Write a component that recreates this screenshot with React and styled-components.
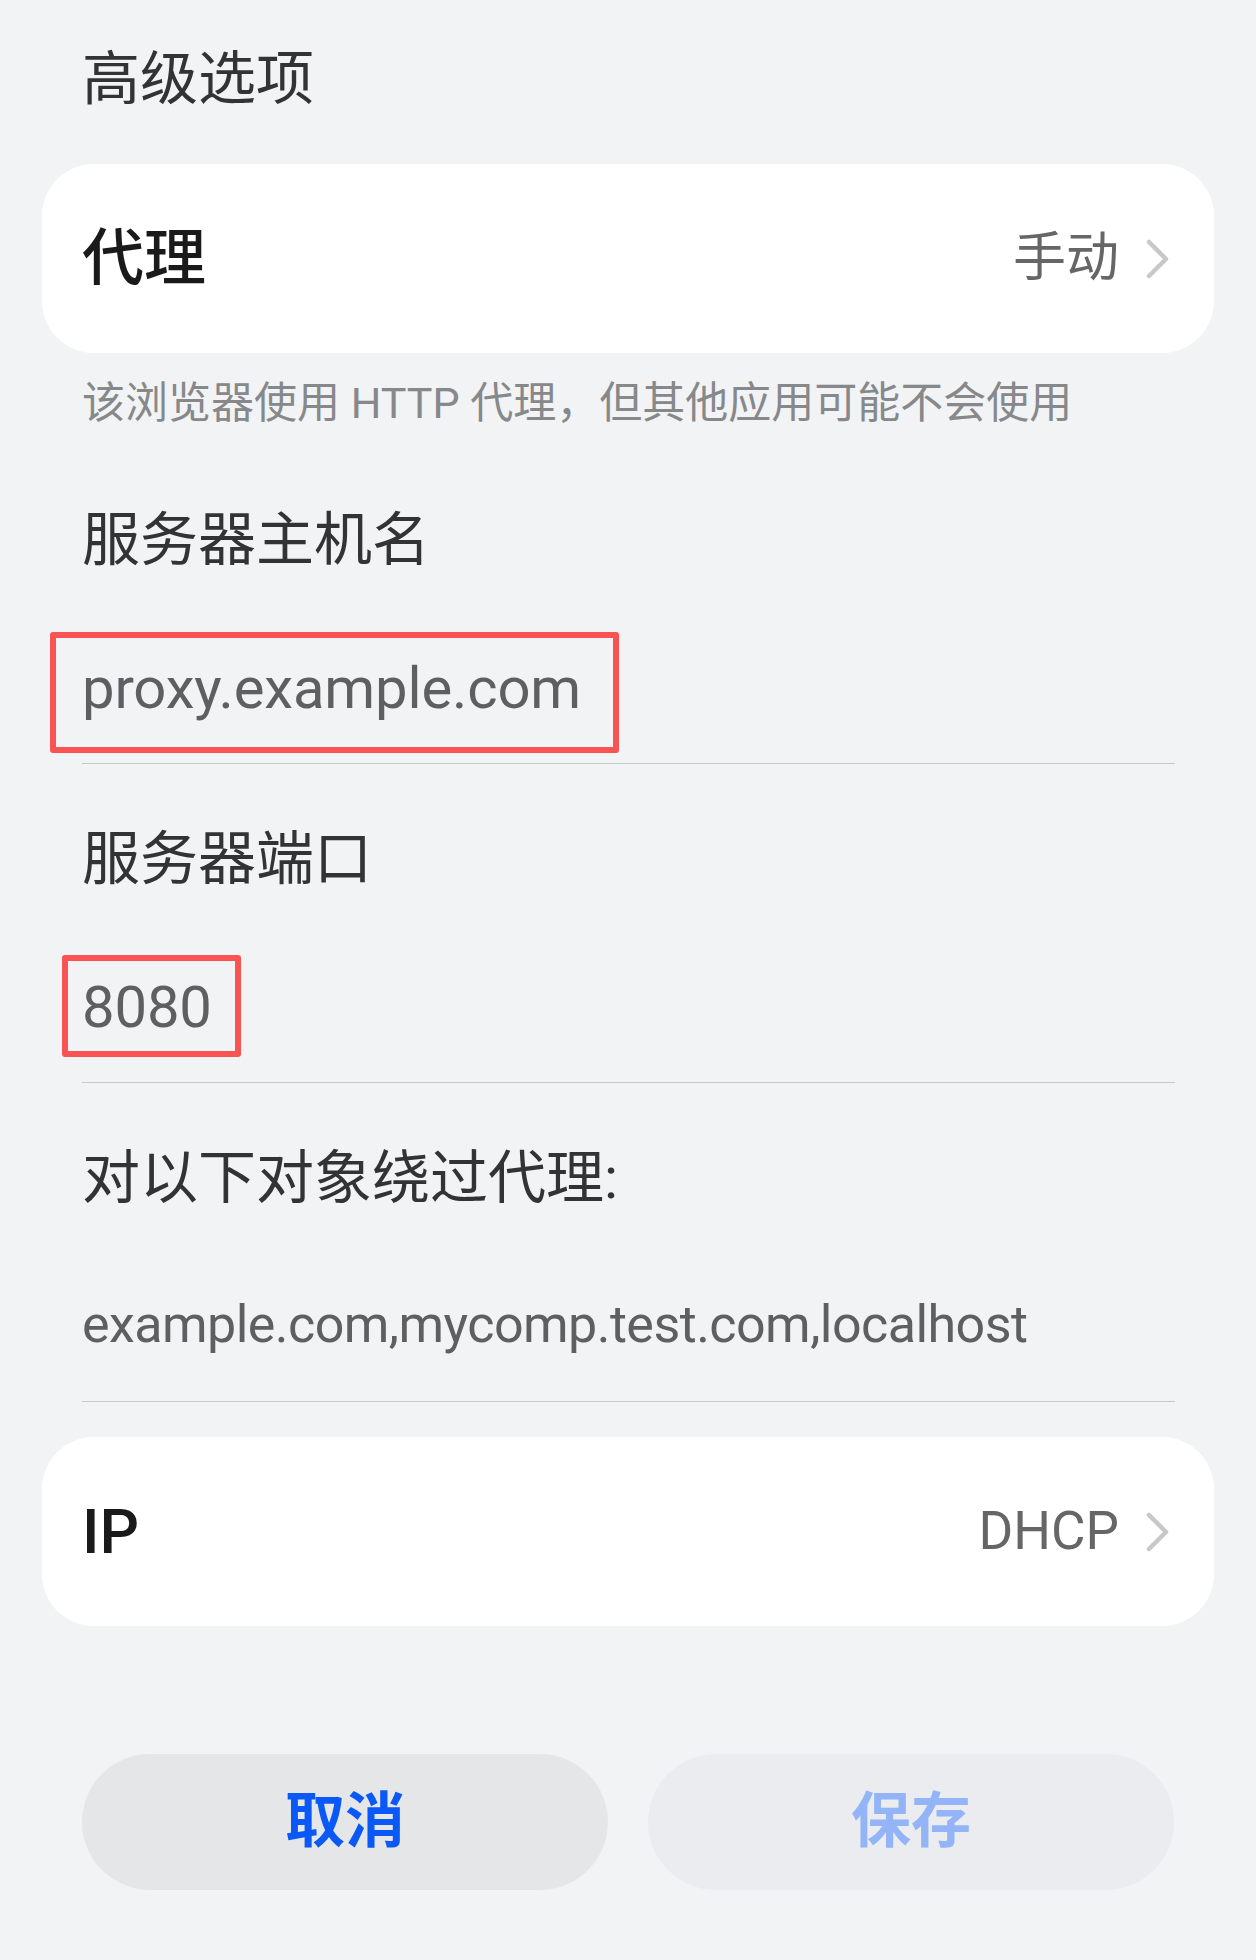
import styled, { createGlobalStyle } from "styled-components";

const GlobalStyle = createGlobalStyle`
  html, body {
    margin: 0;
    padding: 0;
    background: #f1f3f5;
  }
  body {
    font-family: Roboto, "Noto Sans CJK SC", sans-serif;
    -webkit-font-smoothing: antialiased;
  }
`;

const StPage = styled.div`
  width: 1256px;
  height: 1960px;
  box-sizing: border-box;
  padding: 0 42px;
  background: #f1f3f5;
  display: flex;
  flex-direction: column;
`;

const StHeader = styled.h2`
  margin: 0;
  height: 164px;
  box-sizing: border-box;
  padding: 0 0 7px 40px;
  display: flex;
  align-items: center;
  font-size: 58px;
  font-weight: 400;
  line-height: 1;
  color: #333333;
`;

const StCard = styled.div`
  height: 189px;
  box-sizing: border-box;
  padding: 0 43px 0 40px;
  background: #ffffff;
  border-radius: 52px;
  display: flex;
  align-items: center;
  justify-content: space-between;
  margin-top: ${(props) => props.$top || 0}px;
`;

const StCardLabel = styled.span`
  font-size: 62px;
  font-weight: 500;
  line-height: 1;
  color: #1a1a1a;
`;

const StCardValue = styled.span`
  display: flex;
  align-items: center;
  gap: 26px;
  font-size: 53px;
  line-height: 1;
  color: #666666;
`;

const StHint = styled.p`
  margin: 0;
  height: 100px;
  padding-left: 40px;
  display: flex;
  align-items: center;
  font-size: 43px;
  line-height: 1;
  color: #87888a;
`;

const StFields = styled.div`
  margin-top: 47px;
  display: flex;
  flex-direction: column;
  gap: 55px;
`;

const StField = styled.div`
  display: flex;
  flex-direction: column;
  padding: 0 39px 0 40px;
`;

const StFieldLabel = styled.div`
  height: 80px;
  display: flex;
  align-items: center;
  font-size: 58px;
  line-height: 1;
  color: #333333;
`;

const StValueRow = styled.div`
  height: 183px;
  box-sizing: border-box;
  display: flex;
  align-items: flex-end;
  padding-bottom: ${(props) => (props.$small ? 50 : 46)}px;
`;

const StValue = styled.span`
  position: relative;
  display: inline-block;
  font-size: ${(props) => (props.$small ? 52 : 58)}px;
  letter-spacing: ${(props) => (props.$small ? -0.55 : -0.15)}px;
  line-height: 1;
  color: #5e5f61;

  ${(props) =>
    props.$mark &&
    `
    &::after {
      content: "";
      position: absolute;
      inset: ${props.$mark};
      border: 6px solid #f95354;
      border-radius: 3px;
    }
  `}
`;

const StDivider = styled.div`
  height: 1px;
  background: #c8c9cb;
`;

const StButtons = styled.div`
  margin-top: 128px;
  padding: 0 40px;
  display: grid;
  grid-template-columns: 1fr 1fr;
  gap: 40px;
`;

const StButton = styled.button`
  height: 136px;
  border: none;
  border-radius: 68px;
  font-family: inherit;
  font-size: 60px;
  font-weight: 700;
  line-height: 1;
  background: ${(props) => (props.$disabled ? "#eaecef" : "#e5e6e8")};
  color: ${(props) => (props.$disabled ? "#93b4f6" : "#0a59f7")};
`;

function Chevron() {
  return (
    <svg width="26" height="44" viewBox="0 0 26 44" fill="none">
      <polyline
        points="4,5 21,22 4,39"
        stroke="#c8c8c8"
        strokeWidth="4.5"
        strokeLinecap="round"
        strokeLinejoin="round"
      />
    </svg>
  );
}

function NavCard({ label, value, top }) {
  return (
    <StCard $top={top}>
      <StCardLabel>{label}</StCardLabel>
      <StCardValue>
        {value}
        <Chevron />
      </StCardValue>
    </StCard>
  );
}

function Field({ label, value, small, mark }) {
  return (
    <StField>
      <StFieldLabel>{label}</StFieldLabel>
      <StValueRow $small={small}>
        <StValue $small={small} $mark={mark}>
          {value}
        </StValue>
      </StValueRow>
      <StDivider />
    </StField>
  );
}

export default function App() {
  return (
    <>
      <GlobalStyle />
      <StPage>
        <StHeader>高级选项</StHeader>
        <NavCard label="代理" value="手动" />
        <StHint>该浏览器使用 HTTP 代理，但其他应用可能不会使用</StHint>
        <StFields>
          <Field
            label="服务器主机名"
            value="proxy.example.com"
            mark="-27px -38px -36px -32px"
          />
          <Field label="服务器端口" value="8080" mark="-23px -29px -21px -20px" />
          <Field
            label="对以下对象绕过代理:"
            value="example.com,mycomp.test.com,localhost"
            small
          />
        </StFields>
        <NavCard label="IP" value="DHCP" top={35} />
        <StButtons>
          <StButton>取消</StButton>
          <StButton $disabled>保存</StButton>
        </StButtons>
      </StPage>
    </>
  );
}
